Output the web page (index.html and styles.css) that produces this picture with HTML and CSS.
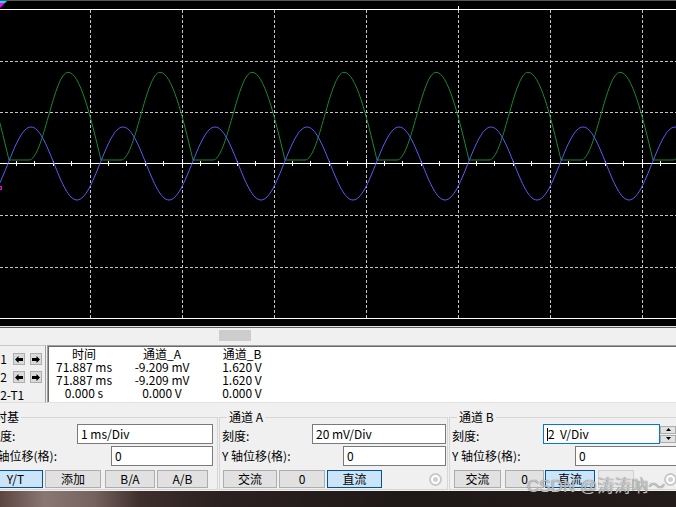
FILE: index.html
```html
<!DOCTYPE html>
<html lang="zh">
<head>
<meta charset="utf-8">
<title>示波器</title>
<link rel="stylesheet" href="styles.css">
</head>
<body>
<div class="app">
  <svg class="screen" width="676" height="326" viewBox="0 0 676 326" xmlns="http://www.w3.org/2000/svg">
    <defs>
      <path id="bp" d="M0,0 C7.5,-18.7 14.68,-36.5 23,-36.5 C31.32,-36.5 38.5,-18.7 46,0 C53.5,18.7 60.68,36.5 69,36.5 C77.32,36.5 84.5,18.7 92,0"/>
      <path id="gp" d="M21,-3.5 C28.06,-3.5 34.14,-24.89 40.5,-47.35 C46.86,-69.81 52.94,-91.2 60,-91.2 C71.94,-91.2 82.24,-48.43 93,-3.5 L113,-3.5"/>
    </defs>
    <rect width="676" height="326" fill="#000"/>
    <rect width="676" height="1" fill="#555"/>
    <g stroke="#c4c4c4" stroke-width="1" stroke-dasharray="3 2" shape-rendering="crispEdges">
      <line x1="0" y1="61.5" x2="676" y2="61.5"/>
      <line x1="0" y1="112.5" x2="676" y2="112.5"/>
      <line x1="0" y1="215.5" x2="676" y2="215.5"/>
      <line x1="0" y1="267.5" x2="676" y2="267.5"/>
      <line x1="90.5" y1="10" x2="90.5" y2="318"/>
      <line x1="182.5" y1="10" x2="182.5" y2="318"/>
      <line x1="274.5" y1="10" x2="274.5" y2="318"/>
      <line x1="366.5" y1="10" x2="366.5" y2="318"/>
      <line x1="458.5" y1="10" x2="458.5" y2="318"/>
      <line x1="550.5" y1="10" x2="550.5" y2="318"/>
      <line x1="642.5" y1="10" x2="642.5" y2="318"/>
    </g>
    <g stroke="#fff" shape-rendering="crispEdges">
      <line x1="0" y1="9.5" x2="676" y2="9.5"/>
      <line x1="0" y1="318.5" x2="676" y2="318.5"/>
      <line x1="0" y1="163.5" x2="676" y2="163.5"/>
      <line x1="16" y1="163.5" x2="676" y2="163.5" stroke-width="5" stroke-dasharray="1 17.4"/>
      <line x1="90" y1="163.5" x2="676" y2="163.5" stroke-width="9" stroke-dasharray="1 91"/>
      <line x1="458.5" y1="6" x2="458.5" y2="9"/>
    </g>
    <g transform="translate(0,163.5)" fill="none" stroke-width="1">
      <g stroke="#168a30">
        <use href="#gp" x="-176"/><use href="#gp" x="-84"/><use href="#gp" x="8"/><use href="#gp" x="100"/>
        <use href="#gp" x="192"/><use href="#gp" x="284"/><use href="#gp" x="376"/><use href="#gp" x="468"/>
        <use href="#gp" x="560"/><use href="#gp" x="652"/>
      </g>
      <g stroke="#5c5cff">
        <use href="#bp" x="-84"/><use href="#bp" x="8"/><use href="#bp" x="100"/><use href="#bp" x="192"/>
        <use href="#bp" x="284"/><use href="#bp" x="376"/><use href="#bp" x="468"/><use href="#bp" x="560"/>
        <use href="#bp" x="652"/>
      </g>
    </g>
    <polygon points="0,1 7,1 5,3 0,3" fill="#00e5ff"/>
    <polygon points="0,3 5,3 0,8" fill="#ff00ff"/>
    <polyline points="0,186.5 1.5,186.5 1.5,189.5 0,189.5" fill="none" stroke="#ff00ff" stroke-width="1"/>
  </svg>
  <div class="screen-edge"></div>
  <div class="hscroll"><div class="hscroll-thumb"></div></div>

  <div class="readout">
    <div class="cursors">
      <div class="cur-row">
        <span class="cur-label">T1</span>
        <span class="cur-btn"><svg width="8" height="7" viewBox="0 0 8 7"><path d="M0,3.5 L3.5,0 L3.5,2 L8,2 L8,5 L3.5,5 L3.5,7 Z" fill="#000"/></svg></span>
        <span class="cur-btn"><svg width="8" height="7" viewBox="0 0 8 7"><path d="M8,3.5 L4.5,0 L4.5,2 L0,2 L0,5 L4.5,5 L4.5,7 Z" fill="#000"/></svg></span>
      </div>
      <div class="cur-row">
        <span class="cur-label">T2</span>
        <span class="cur-btn"><svg width="8" height="7" viewBox="0 0 8 7"><path d="M0,3.5 L3.5,0 L3.5,2 L8,2 L8,5 L3.5,5 L3.5,7 Z" fill="#000"/></svg></span>
        <span class="cur-btn"><svg width="8" height="7" viewBox="0 0 8 7"><path d="M8,3.5 L4.5,0 L4.5,2 L0,2 L0,5 L4.5,5 L4.5,7 Z" fill="#000"/></svg></span>
      </div>
      <div class="cur-diff">T2-T1</div>
    </div>
    <div class="values">
      <span>时间</span><span>通道_A</span><span>通道_B</span>
      <span>71.887 ms</span><span>-9.209 mV</span><span>1.620 V</span>
      <span>71.887 ms</span><span>-9.209 mV</span><span>1.620 V</span>
      <span>0.000 s</span><span>0.000 V</span><span>0.000 V</span>
    </div>
  </div>

  <div class="controls">
    <fieldset class="group group-time">
      <legend>时基</legend>
      <div class="row row-scale"><span class="label">刻度:</span><div class="field time-scale">1 ms/Div</div></div>
      <div class="row"><span class="label">X 轴位移(格):</span><div class="field time-pos">0</div></div>
      <div class="btn-row">
        <span class="btn btn-active yt">Y/T</span>
        <span class="btn add">添加</span>
        <span class="btn ba">B/A</span>
        <span class="btn ab">A/B</span>
      </div>
    </fieldset>
    <fieldset class="group group-a">
      <legend>通道 A</legend>
      <div class="row row-scale"><span class="label">刻度:</span><div class="field a-scale">20 mV/Div</div></div>
      <div class="row"><span class="label">Y 轴位移(格):</span><div class="field a-pos">0</div></div>
      <div class="btn-row">
        <span class="btn a-ac">交流</span>
        <span class="btn a-zero">0</span>
        <span class="btn btn-active a-dc">直流</span>
        <span class="radio"></span>
      </div>
    </fieldset>
    <fieldset class="group group-b">
      <legend>通道 B</legend>
      <div class="row row-scale"><span class="label">刻度:</span><div class="field field-focus b-scale"><span class="caret"></span>2  V/Div</div>
        <div class="spin">
          <span class="spin-btn"><svg width="5" height="3" viewBox="0 0 5 3"><path d="M0,3 L2.5,0 L5,3 Z" fill="#000"/></svg></span>
          <span class="spin-btn"><svg width="5" height="3" viewBox="0 0 5 3"><path d="M0,0 L2.5,3 L5,0 Z" fill="#000"/></svg></span>
        </div>
      </div>
      <div class="row"><span class="label">Y 轴位移(格):</span><div class="field b-pos">0</div></div>
      <div class="btn-row">
        <span class="btn b-ac">交流</span>
        <span class="btn b-zero">0</span>
        <span class="btn btn-active b-dc">直流</span>
        <span class="btn btn-disabled b-ext"></span>
        <span class="radio"></span>
      </div>
    </fieldset>
  </div>

  <div class="desktop"></div>
  <div class="watermark">CSDN @涛涛吶～</div>
</div>
</body>
</html>
```
FILE: styles.css
```css
* { box-sizing: border-box; }
html, body { margin: 0; padding: 0; }
body {
  width: 676px;
  height: 507px;
  overflow: hidden;
  background: #f0f0f0;
  font-family: "Noto Sans CJK SC", "Noto Sans", sans-serif;
  font-size: 12px;
  color: #000;
}
.app {
  position: relative;
  width: 676px;
  height: 507px;
  overflow: hidden;
  display: flex;
  flex-direction: column;
}
.screen { display: block; flex: none; }
.screen-edge {
  flex: none;
  height: 2px;
  border-top: 1px solid #e6e6e6;
  border-bottom: 1px solid #5f5f5f;
}
.hscroll { flex: none; height: 17px; padding: 2px 0 0 219px; }
.hscroll-thumb { width: 32px; height: 11px; background: #cdcdcd; }

/* readout */
.readout { flex: none; height: 58px; display: flex; }
.cursors {
  width: 46px;
  flex: none;
  margin-right: 1px;
  padding-top: 7px;
  border-top: 1px solid #c8c8c8;
  border-right: 1px solid #a0a0a0;
  border-bottom: 1px solid #e0e0e0;
}
.cur-row { display: flex; align-items: center; height: 12px; margin-bottom: 6px; }
.cur-label { width: 20px; margin-left: -7px; line-height: 12px; white-space: nowrap; flex: none; }
.cur-btn {
  width: 12px;
  height: 12px;
  flex: none;
  border: 1px solid #adadad;
  background: #dadada;
  display: flex;
  align-items: center;
  justify-content: center;
}
.cur-btn svg { display: block; }
.cur-btn + .cur-btn { margin-left: 5px; }
.cur-diff { margin-top: -1px; margin-left: -7px; line-height: 13px; white-space: nowrap; }

.values {
  flex: 1;
  background: #fff;
  border-top: 1px solid #a0a0a0;
  border-left: 1px solid #a0a0a0;
  border-bottom: 1px solid #e3e3e3;
  box-shadow: inset 1px 1px 0 #696969;
  padding: 1px 0 0 1px;
  display: grid;
  grid-template-columns: 70px 86px 74px;
  grid-auto-rows: 13px;
  align-content: start;
  line-height: 13px;
  text-align: center;
  white-space: nowrap;
}

/* controls */
.controls { flex: none; height: 88px; display: flex; align-items: flex-start; padding-top: 7px; }
.group {
  flex: none;
  margin: 0;
  height: 80px;
  min-width: 0;
  border: 1px solid #d6d6d6;
  padding: 0 1px 0 2px;
}
.group legend { margin-left: 5px; padding: 0 2px; line-height: 14px; font-size: 12px; }
.group-time { margin-left: -15px; width: 233px; padding-right: 4px; }
.group-a { margin-left: 1px; width: 229px; }
.group-b { margin-left: 1px; width: 234px; }

.row { display: flex; align-items: center; height: 20px; }
.row + .row { margin-top: 2px; }
.label { flex: 1; min-width: 0; white-space: nowrap; line-height: 14px; }
.row-scale .label { padding-top: 4px; }
.field {
  flex: none;
  height: 20px;
  border: 1px solid #7a7a7a;
  background: #fff;
  padding: 0 3px;
  line-height: 18px;
  white-space: pre;
  overflow: hidden;
}
.field-focus { border-color: #0078d7; }
.caret { display: inline-block; width: 1px; height: 13px; background: #000; vertical-align: -2px; }
.time-scale { width: 136px; }
.time-pos { width: 102px; }
.a-scale { width: 134px; }
.a-pos { width: 103px; }
.b-scale { width: 117px; }
.b-pos { width: 106px; }
.spin { flex: none; width: 16px; height: 17px; margin-right: 5px; display: flex; flex-direction: column; }
.spin-btn {
  flex: 1;
  border: 1px solid #adadad;
  background: #e1e1e1;
  display: flex;
  align-items: center;
  justify-content: center;
}
.spin-btn svg { display: block; }
.spin-btn + .spin-btn { margin-top: 1px; }

.btn-row { display: flex; align-items: center; height: 18px; margin-top: 4px; }
.btn {
  flex: none;
  height: 18px;
  border: 1px solid #adadad;
  background: #e1e1e1;
  line-height: 16px;
  text-align: center;
}
.btn-active { background: #cce4f7; border-color: #005499; }
.btn-disabled { background: #e9e9e9; border-color: #d0d0d0; }
.yt { width: 55px; }
.add { width: 56px; margin-left: 2px; }
.ba { width: 50px; margin-left: 4px; }
.ab { width: 51px; margin-left: 2px; }
.a-ac { width: 54px; margin-left: 1px; }
.a-zero { width: 46px; margin-left: 2px; }
.a-dc { width: 55px; margin-left: 2px; }
.b-ac { width: 47px; margin-left: 2px; }
.b-zero { width: 39px; margin-left: 4px; }
.b-dc { width: 50px; margin-left: 1px; }
.b-ext { width: 36px; margin-left: 3px; }
.radio {
  flex: none;
  width: 13px;
  height: 13px;
  margin-left: auto;
  margin-right: 4px;
  border-radius: 50%;
  border: 2px solid #c9c9c9;
  background: #fff;
  display: flex;
  align-items: center;
  justify-content: center;
}
.radio::after { content: ""; width: 5px; height: 5px; border-radius: 50%; background: #d0d0d0; }

.desktop {
  flex: none;
  height: 16px;
  background: linear-gradient(90deg, #5b4541 0px, #8a7773 45px, #75615d 95px, #3d2f2c 140px, #2b2120 220px, #1f1918 400px, #221b1a 676px);
}
.watermark {
  position: absolute;
  left: 527px;
  top: 476px;
  font-family: "Liberation Sans", "Noto Sans CJK SC", sans-serif;
  font-size: 17px;
  line-height: 22px;
  color: rgba(215, 215, 215, 0.85);
  text-shadow: 0 0 1px rgba(60, 60, 60, 0.9);
  white-space: nowrap;
}
```
